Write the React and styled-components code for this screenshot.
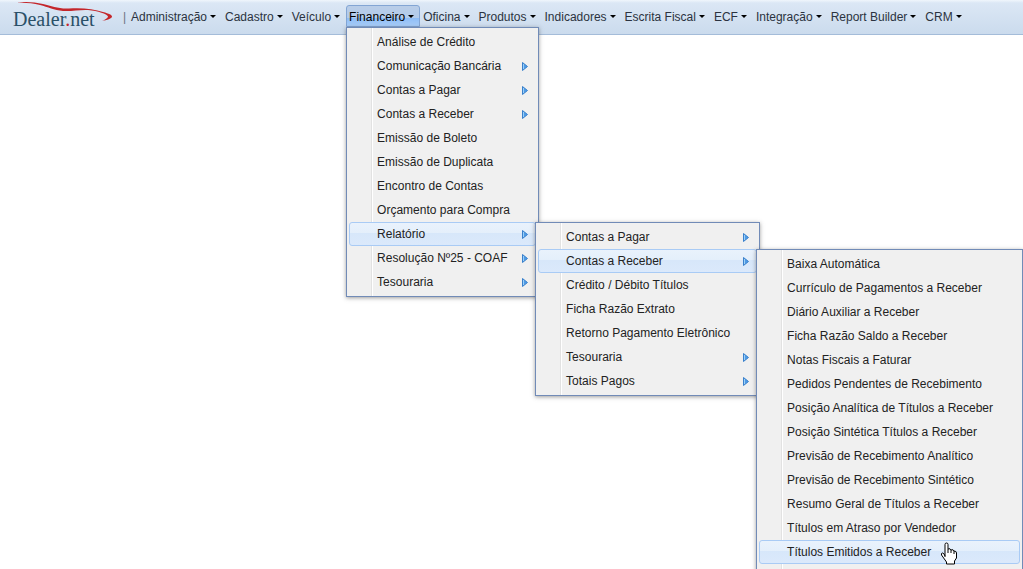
import React from "react";
import styled, { createGlobalStyle, css } from "styled-components";

const GlobalStyle = createGlobalStyle`
  *, *::before, *::after { box-sizing: border-box; }
  html, body { margin: 0; height: 100%; overflow: hidden; background: #fff; }
  body, button { font-family: "Liberation Sans", Arial, sans-serif; font-size: 12px; }
`;

const TopBar = styled.header`
  display: flex;
  align-items: flex-start;
  height: 35px;
  padding: 0 12px;
  background: linear-gradient(#f0f6fc 0, #dbe7f5 3px, #cbdbed 100%);
  border-bottom: 1px solid #a4bcd9;
`;

const LogoLink = styled.a`
  display: block;
  width: 104px;
  height: 32px;
  flex: none;
`;

const Divider = styled.span`
  width: 12px;
  padding-left: 7px;
  line-height: 34px;
  color: #6b7480;
`;

const MenuBar = styled.ul`
  display: flex;
  margin: 0;
  padding: 5px 0 0;
  list-style: none;
`;

const BarEntry = styled.li`
  position: relative;
`;

const BarButton = styled.button`
  display: flex;
  align-items: center;
  height: 22px;
  padding: 2px 5px 0 2px;
  border: 1px solid transparent;
  border-radius: 3px 3px 0 0;
  background: none;
  color: #2b3340;
  line-height: 18px;
  white-space: nowrap;
  cursor: pointer;

  &::after {
    content: "";
    margin: 0 0 1px 3px;
    border: 3px solid transparent;
    border-top-color: #000;
    border-bottom-width: 0;
  }

  ${(p) =>
    p.$open &&
    css`
      border-color: #82a5d4;
      background: linear-gradient(#b9cde8 0, #b3cbea 60%, #8dbcf5 61%, #a9cef9 100%);
      color: #000;
    `}
`;

const Menu = styled.ul`
  position: absolute;
  z-index: 1;
  top: ${(p) => (p.$root ? "22px" : "0")};
  left: ${(p) => (p.$root ? "0" : "calc(100% - 1px)")};
  min-width: ${(p) => p.$width}px;
  margin: 0;
  padding: 2px 2px ${(p) => (p.$more ? 26 : 2)}px;
  border: 1px solid #718bb7;
  background: linear-gradient(90deg, transparent 24px, #e2e2e2 24px, #e2e2e2 25px, #fff 25px, #fff 26px, transparent 26px) #f0f0f0;
  box-shadow: 0 1px 4px rgba(60, 60, 60, 0.5);
  list-style: none;
`;

const MenuEntry = styled.li`
  position: relative;
`;

const MenuButton = styled.button`
  display: flex;
  align-items: center;
  justify-content: space-between;
  width: 100%;
  height: 24px;
  padding: 0 7px 0 27px;
  border: 1px solid transparent;
  border-radius: 3px;
  background: none;
  color: #222;
  text-align: left;
  white-space: nowrap;
  cursor: pointer;

  ${(p) =>
    p.$active &&
    css`
      border-color: #a9cbf5;
      background: linear-gradient(#e9f2fc 0, #e4effb 45%, #d7e7fa 46%, #dbe9fb 100%);
    `}
`;

const HandPointer = styled.svg`
  position: absolute;
  z-index: 2;
  top: 2px;
  left: 181px;
  pointer-events: none;
`;

function Logo() {
  return (
    <LogoLink href="#" aria-label="Dealer.net">
      <svg width="104" height="32" viewBox="0 0 104 32">
        <path
          d="M5 3C12 1 22 2 31 4C40 6 46 9 57 8.500C70 7.500 82 9 91 12C97 13.500 100 15 100 16.500C100 18.500 95 20 90 21C94 19 96 18 96 16.500C95 14 86 11 76 10C68 9.500 60 11.500 51 11C42 10 36 7 28 5C20 3 12 2.500 5 3Z"
          fill="#c4262b"
        />
        <text x="1" y="26" fontFamily="Liberation Serif, Times New Roman, serif" fontSize="20" fill="#2a5068">
          Dealer<tspan fill="#c4262b">.</tspan>net
        </text>
      </svg>
    </LogoLink>
  );
}

function SubmenuArrow() {
  return (
    <svg width="6" height="9" viewBox="0 0 6 9" aria-hidden="true">
      <path d="M0.5 0.5V8.5L5.5 4.5Z" fill="#4f9be6" stroke="#3a80cb" />
      <path d="M1.5 2V7" stroke="#9cd0f8" />
    </svg>
  );
}

function Pointer() {
  return (
    <HandPointer width="18" height="24" viewBox="0 0 18 24" aria-hidden="true">
      <path
        d="M5 15V2.5Q5 1 6.5 1Q8 1 8 2.5V7Q10.500 6 11 8Q13.500 7 14 9Q16.500 9 16.500 11V16L14.500 19V22H6.500V20L1.500 13Q1 11 2.500 11Q4 11 5 14"
        fill="#fff"
        stroke="#000"
        strokeLinejoin="round"
      />
      <path d="M8 7V11M11 8V11M14 9V12" stroke="#000" fill="none" />
    </HandPointer>
  );
}

const receivableReports = {
  width: 267,
  more: true,
  items: [
    { label: "Baixa Automática" },
    { label: "Currículo de Pagamentos a Receber" },
    { label: "Diário Auxiliar a Receber" },
    { label: "Ficha Razão Saldo a Receber" },
    { label: "Notas Fiscais a Faturar" },
    { label: "Pedidos Pendentes de Recebimento" },
    { label: "Posição Analítica de Títulos a Receber" },
    { label: "Posição Sintética Títulos a Receber" },
    { label: "Previsão de Recebimento Analítico" },
    { label: "Previsão de Recebimento Sintético" },
    { label: "Resumo Geral de Títulos a Receber" },
    { label: "Títulos em Atraso por Vendedor" },
    { label: "Títulos Emitidos a Receber", active: true, pointer: true },
  ],
};

const reports = {
  width: 225,
  items: [
    { label: "Contas a Pagar", arrow: true },
    { label: "Contas a Receber", arrow: true, active: true, menu: receivableReports },
    { label: "Crédito / Débito Títulos" },
    { label: "Ficha Razão Extrato" },
    { label: "Retorno Pagamento Eletrônico" },
    { label: "Tesouraria", arrow: true },
    { label: "Totais Pagos", arrow: true },
  ],
};

const finance = {
  width: 193,
  items: [
    { label: "Análise de Crédito" },
    { label: "Comunicação Bancária", arrow: true },
    { label: "Contas a Pagar", arrow: true },
    { label: "Contas a Receber", arrow: true },
    { label: "Emissão de Boleto" },
    { label: "Emissão de Duplicata" },
    { label: "Encontro de Contas" },
    { label: "Orçamento para Compra" },
    { label: "Relatório", arrow: true, active: true, menu: reports },
    { label: "Resolução Nº25 - COAF", arrow: true },
    { label: "Tesouraria", arrow: true },
  ],
};

const bar = [
  { label: "Administração" },
  { label: "Cadastro" },
  { label: "Veículo" },
  { label: "Financeiro", menu: finance },
  { label: "Oficina" },
  { label: "Produtos" },
  { label: "Indicadores" },
  { label: "Escrita Fiscal" },
  { label: "ECF" },
  { label: "Integração" },
  { label: "Report Builder" },
  { label: "CRM" },
];

function MenuList({ menu, root }) {
  return (
    <Menu $root={root} $width={menu.width} $more={menu.more}>
      {menu.items.map((item) => (
        <MenuEntry key={item.label}>
          <MenuButton type="button" $active={item.active}>
            {item.label}
            {item.arrow && <SubmenuArrow />}
          </MenuButton>
          {item.pointer && <Pointer />}
          {item.menu && <MenuList menu={item.menu} />}
        </MenuEntry>
      ))}
    </Menu>
  );
}

export default function App() {
  return (
    <>
      <GlobalStyle />
      <TopBar>
        <Logo />
        <Divider>|</Divider>
        <MenuBar>
          {bar.map((entry) => (
            <BarEntry key={entry.label}>
              <BarButton type="button" $open={Boolean(entry.menu)}>
                {entry.label}
              </BarButton>
              {entry.menu && <MenuList menu={entry.menu} root />}
            </BarEntry>
          ))}
        </MenuBar>
      </TopBar>
    </>
  );
}
